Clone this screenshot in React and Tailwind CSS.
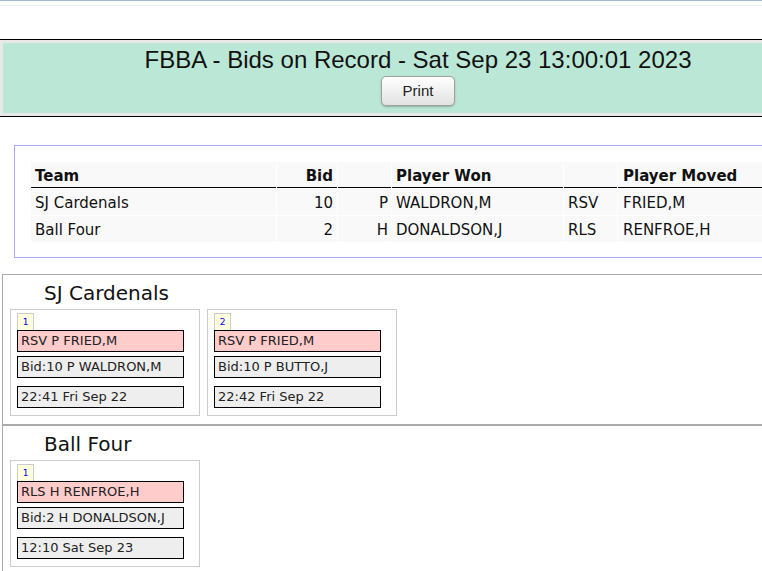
import React from 'react';

const bids = [
  { team: 'SJ Cardenals', bid: 10, pos: 'P', won: 'WALDRON,M', move: 'RSV', moved: 'FRIED,M' },
  { team: 'Ball Four', bid: 2, pos: 'H', won: 'DONALDSON,J', move: 'RLS', moved: 'RENFROE,H' },
];

const teams = [
  {
    name: 'SJ Cardenals',
    cards: [
      { n: 1, action: 'RSV P FRIED,M', bid: 'Bid:10 P WALDRON,M', time: '22:41 Fri Sep 22' },
      { n: 2, action: 'RSV P FRIED,M', bid: 'Bid:10 P BUTTO,J', time: '22:42 Fri Sep 22' },
    ],
  },
  {
    name: 'Ball Four',
    cards: [{ n: 1, action: 'RLS H RENFROE,H', bid: 'Bid:2 H DONALDSON,J', time: '12:10 Sat Sep 23' }],
  },
];

const verdana = "font-['DejaVu_Sans',Verdana,sans-serif]";

const BidCard = ({ card }) => (
  <div className="w-[190px] border border-[#cccccc] pl-[6px] pt-[3px] pb-[7px]">
    <div className="w-[17px] h-[17px] border border-b-0 border-[#cccccc] bg-[#ffffdd] text-[9px] leading-[16px] text-center text-[#0000ff]">
      {card.n}
    </div>
    <div className="w-[167px] h-[22px] border border-black bg-[#ffcccc] pl-[3px] text-[13px] leading-[20px] text-[#222]">
      {card.action}
    </div>
    <div className="w-[167px] h-[22px] mt-[4px] border border-black bg-[#eeeeee] pl-[3px] text-[13px] leading-[20px] text-[#222]">
      {card.bid}
    </div>
    <div className="w-[167px] h-[22px] mt-[8px] border border-black bg-[#eeeeee] pl-[3px] text-[13px] leading-[20px] text-[#222]">
      {card.time}
    </div>
  </div>
);

export default function App() {
  return (
    <div className="w-[762px] h-[571px] overflow-hidden bg-white">
      <div className={`w-[836px] ${verdana}`}>
        <div className="h-px bg-[#a7bbce]" />
        <div className="h-px mt-[4px] bg-[#eeeeee]" />

        <div className="mt-[33px] border-y border-black">
          <div className="border-[3px] border-[#e8e8e8] bg-[#bbe8d6] pt-[3px] pb-[7px] flex flex-col items-center">
            <div className="font-['Liberation_Sans',Arial,sans-serif] text-[24px] leading-[28px] text-[#111]">
              FBBA - Bids on Record - Sat Sep 23 13:00:01 2023
            </div>
            <button className="mt-[2px] w-[74px] h-[30px] rounded-[5px] border border-[#a0a0a0] bg-gradient-to-b from-white to-[#e2e2e2] shadow-[0_1px_2px_rgba(0,0,0,0.25)] font-['Liberation_Sans',Arial,sans-serif] text-[15px] text-[#222]">
              Print
            </button>
          </div>
        </div>

        <div className="mt-[28px] ml-[14px] w-[808px] border border-[#a8a8ff] px-[15px] pt-[15px] pb-[14px]">
          <table className="table-fixed w-[760px] border-separate border-spacing-[1px] text-[15px] leading-[18px] text-[#111]">
            <colgroup>
              <col className="w-[245px]" />
              <col className="w-[60px]" />
              <col className="w-[53px]" />
              <col className="w-[171px]" />
              <col className="w-[53px]" />
              <col />
            </colgroup>
            <thead>
              <tr>
                <th className="bg-[#f9f9f9] border-b border-black text-left font-bold pl-[4px] pt-[5px] pb-[2px]">Team</th>
                <th className="bg-[#f9f9f9] border-b border-black text-right font-bold pr-[4px] pt-[5px] pb-[2px]">Bid</th>
                <th className="bg-[#f9f9f9] border-b border-black pt-[5px] pb-[2px]"></th>
                <th className="bg-[#f9f9f9] border-b border-black text-left font-bold pl-[4px] pt-[5px] pb-[2px]">Player Won</th>
                <th className="bg-[#f9f9f9] border-b border-black pt-[5px] pb-[2px]"></th>
                <th className="bg-[#f9f9f9] border-b border-black text-left font-bold pl-[5px] pt-[5px] pb-[2px]">Player Moved</th>
              </tr>
            </thead>
            <tbody>
              {bids.map((b) => (
                <tr key={b.team}>
                  <td className="bg-[#f9f9f9] pl-[4px] pt-[5px] pb-[3px]">{b.team}</td>
                  <td className="bg-[#f9f9f9] text-right pr-[4px] pt-[5px] pb-[3px]">{b.bid}</td>
                  <td className="bg-[#f9f9f9] text-right pr-[3px] pt-[5px] pb-[3px]">{b.pos}</td>
                  <td className="bg-[#f9f9f9] pl-[4px] pt-[5px] pb-[3px]">{b.won}</td>
                  <td className="bg-[#f9f9f9] pl-[4px] pt-[5px] pb-[3px]">{b.move}</td>
                  <td className="bg-[#f9f9f9] pl-[5px] pt-[5px] pb-[3px]">{b.moved}</td>
                </tr>
              ))}
            </tbody>
          </table>
        </div>

        <div className="mt-[16px]">
          {teams.map((t) => (
            <div key={t.name} className="ml-[2px] border border-[#aaaaaa] pl-[7px] pt-[6px] pb-[8px]">
              <div className="pl-[34px] text-[20px] leading-[24px] text-[#111] mb-[4px]">{t.name}</div>
              <div className="flex gap-[7px]">
                {t.cards.map((c) => (
                  <BidCard key={c.n} card={c} />
                ))}
              </div>
            </div>
          ))}
        </div>
      </div>
    </div>
  );
}
